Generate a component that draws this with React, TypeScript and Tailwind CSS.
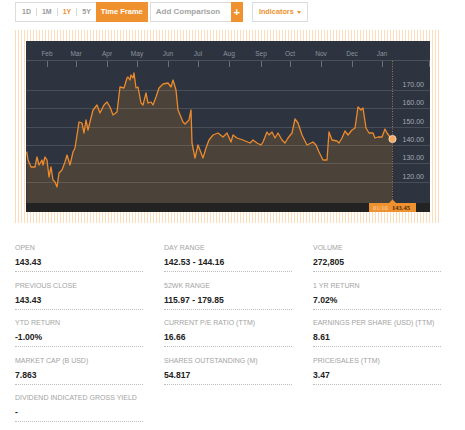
import React from "react";

const RAW: [number, number][] = [
  [26.7,151.7],[28,160],[31,167],[35,167],[37,157],[39,165],[42,160],[43,165],[45,157],[47,160],[49,177],[51,167],[53,180],[55,182],[57,187],[59,173],[62,170],[65,162],[67,155],[70,165],[73,152],[75,148],[79,122],[82,123],[84,133],[86,120],[88,130],[93,110],[97,105],[100,113],[104,105],[107,102],[110,107],[113,115],[117,112],[120,87],[124,88],[127,78],[128,77],[130,80],[131,75],[133,78],[134,73],[136,88],[138,87],[141,103],[143,105],[146,93],[148,103],[151,102],[153,105],[156,97],[159,88],[163,84],[168,83],[171,87],[173,80],[176,90],[178,110],[183,122],[185,124],[189,120],[191,110],[192,143],[195,158],[198,145],[203,158],[206,148],[209,140],[213,135],[218,133],[223,137],[227,133],[231,142],[233,135],[237,138],[243,140],[250,143],[253,140],[257,143],[261,145],[263,142],[267,132],[269,135],[272,132],[275,138],[278,133],[282,140],[285,143],[288,138],[292,133],[295,119],[298,123],[302,135],[307,145],[313,142],[316,145],[319,152],[323,160],[327,160],[329,132],[332,140],[337,141],[339,143],[342,138],[345,131],[348,135],[352,130],[355,128],[358,107],[361,110],[363,108],[366,128],[369,133],[373,133],[375,138],[378,137],[382,137],[385,129],[387,133],[390,137],[392,139],
];

const PTS = RAW.map(([x, y]) => [x - 26, y - 41] as [number, number]);
const LINE = PTS.map(([x, y], i) => `${i ? "L" : "M"}${x.toFixed(1)} ${y.toFixed(1)}`).join(" ");
const AREA = `${LINE} L366 162 L0.7 162 Z`;

const MONTHS: [string, number][] = [
  ["Feb", 47], ["Mar", 76], ["Apr", 107], ["May", 137], ["Jun", 168], ["Jul", 198], ["Aug", 229],
  ["Sep", 261], ["Oct", 290], ["Nov", 321], ["Dec", 352], ["Jan", 382],
];
const GRID = [49, 67, 86, 104, 122, 141];
const YLAB = ["170.00", "160.00", "150.00", "140.00", "130.00", "120.00"];

function Chart() {
  return (
    <svg width="404" height="171" viewBox="0 0 404 171" className="block" style={{ fontFamily: '"Liberation Sans", Arial, sans-serif' }}>
      <rect x="0" y="0" width="404" height="171" fill="#2d3440" />
      <path d={AREA} fill="#4b4239" />
      {GRID.map((y) => (
        <line key={y} x1="0" x2="404" y1={y + 0.5} y2={y + 0.5} stroke="#ffffff" strokeOpacity="0.13" strokeWidth="1" />
      ))}
      <line x1="0" x2="404" y1="19.5" y2="19.5" stroke="#ffffff" strokeOpacity="0.15" />
      {MONTHS.map(([m, x]) => (
        <g key={m}>
          <text x={x - 26} y="14.5" fontSize="6.5" fill="#8c939e" textAnchor="middle">{m}</text>
          <line x1={x - 26 + 0.5} x2={x - 26 + 0.5} y1="20" y2="26" stroke="#ffffff" strokeOpacity="0.3" />
        </g>
      ))}
      <line x1="403.5" x2="403.5" y1="20" y2="26" stroke="#ffffff" strokeOpacity="0.3" />
      {YLAB.map((t, i) => (
        <text key={t} x="398" y={GRID[i] - 3.5} fontSize="7" fill="#a4a9b2" textAnchor="end">{t}</text>
      ))}
      <path d={LINE} fill="none" stroke="#ec8a2c" strokeWidth="1.3" strokeLinejoin="round" />
      <line x1="366.5" x2="366.5" y1="20" y2="162" stroke="#a9753d" strokeWidth="1" strokeDasharray="1 1.5" />
      <rect x="0" y="162" width="404" height="9" fill="#232323" />
      <polygon points="363,162 366.5,158.5 370,162" fill="#f0912f" />
      <rect x="343" y="162" width="47" height="9" fill="#f0912f" />
      <text x="347" y="169.2" fontSize="6.5" fill="#fbd9b2" style={{ fontFamily: '"Liberation Serif", serif' }}>01/10</text>
      <text x="366" y="169.2" fontSize="6.5" fontWeight="bold" fill="#4a2a0a" style={{ fontFamily: '"Liberation Serif", serif' }}>143.45</text>
      <circle cx="366.5" cy="98" r="3.6" fill="#f5a962" stroke="#fde7cf" strokeWidth="0.8" />
    </svg>
  );
}

const STATS: [string, string][] = [
  ["OPEN", "143.43"], ["DAY RANGE", "142.53 - 144.16"], ["VOLUME", "272,805"],
  ["PREVIOUS CLOSE", "143.43"], ["52WK RANGE", "115.97 - 179.85"], ["1 YR RETURN", "7.02%"],
  ["YTD RETURN", "-1.00%"], ["CURRENT P/E RATIO (TTM)", "16.66"], ["EARNINGS PER SHARE (USD) (TTM)", "8.61"],
  ["MARKET CAP (B USD)", "7.863"], ["SHARES OUTSTANDING (M)", "54.817"], ["PRICE/SALES (TTM)", "3.47"],
  ["DIVIDEND INDICATED GROSS YIELD", "-"],
];

export default function App() {
  return (
    <div className="w-[465px] h-[430px] bg-white px-[15px] pt-[2px] font-['Liberation_Sans',Arial,sans-serif]">
      <div className="flex h-[20px] items-stretch">
        <div className="flex items-stretch border border-[#dcdcdc]">
          <div className="flex items-center pl-[6px] pr-0 text-[7px] font-bold text-[#9a9a9a]">
            <span>1D</span>
            <span className="mx-[5px] h-[8px] w-px bg-[#d8d8d8]" />
            <span>1M</span>
            <span className="mx-[5px] h-[8px] w-px bg-[#d8d8d8]" />
            <span className="text-[#f0912f]">1Y</span>
            <span className="mx-[5px] h-[8px] w-px bg-[#d8d8d8]" />
            <span>5Y</span>
          </div>
          <div className="ml-[5px] -my-px -mr-px flex w-[52px] items-center justify-center bg-[#f0912f] text-[7.5px] font-bold text-white">
            Time Frame
          </div>
        </div>
        <div className="ml-[2px] flex items-stretch">
          <div className="flex w-[81px] items-center border border-r-0 border-[#dcdcdc] pl-[5px] text-[8px] font-bold text-[#a3a3a3]">
            Add Comparison
          </div>
          <div className="flex w-[12px] items-center justify-center bg-[#f0912f] text-[11px] font-bold leading-none text-white">
            +
          </div>
        </div>
        <div className="ml-[9px] flex w-[56px] items-center justify-center gap-[3px] border border-[#dcdcdc] text-[7.3px] font-bold text-[#f0912f]">
          <span>Indicators</span>
          <span className="h-0 w-0 border-x-[2.5px] border-t-[3px] border-x-transparent border-t-[#f0912f]" />
        </div>
      </div>

      <div className="mt-[8px] w-[426px] p-[11px] bg-[repeating-linear-gradient(90deg,#fcdcbb_0px,#fcdcbb_1.5px,#ffffff_1.5px,#ffffff_3px)]">
        <Chart />
      </div>

      <div className="mt-[20px] grid w-[426px] grid-cols-3 gap-x-[21px] gap-y-[8.5px]">
        {STATS.map(([l, v]) => (
          <div key={l} className="border-b border-dotted border-[#bdbdbd] pb-[3px]">
            <div className="h-[10px] whitespace-nowrap text-[7px] leading-[10px] text-[#a3a3a3]">{l}</div>
            <div className="mt-[3px] h-[12px] text-[8.6px] font-bold leading-[12px] text-[#222]">{v}</div>
          </div>
        ))}
      </div>
    </div>
  );
}
